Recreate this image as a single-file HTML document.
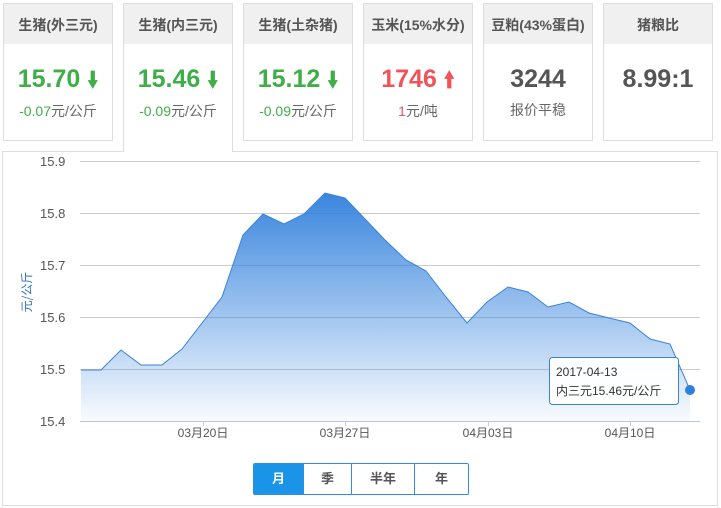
<!DOCTYPE html>
<html><head><meta charset="utf-8"><style>
body{margin:0;width:721px;height:508px;background:#fff;font-family:"Liberation Sans","Noto Sans CJK SC",sans-serif;position:relative;overflow:hidden}
.card{position:absolute;top:3px;width:108px;height:136px;border:1px solid #ddd;background:#fff;text-align:center}
.card .h{height:40px;background:#f0f0f0;line-height:42px;font-size:14px;font-weight:bold;color:#555}
.card .v{margin-top:20px;font-size:25px;font-weight:bold;line-height:30px}
.card .s{margin-top:6px;font-size:14px;color:#666}
.g{color:#3fae49}.r{color:#f05459}.k{color:#555}
.act{height:148px;border-bottom:none;z-index:2}
.panel{position:absolute;left:2px;top:151px;width:714px;height:353px;border:1px solid #ddd}
.btns{position:absolute;top:463px;left:253px;height:30px;border:1px solid #2f8de4;display:flex;border-radius:2px;overflow:hidden}
.btns div{height:30px;line-height:30px;text-align:center;font-size:13px;font-weight:bold;color:#555;border-left:1px solid #2f8de4}
.btns div:first-child{border-left:none;background:#1a94e6;color:#fff}
</style></head><body>
<div class="panel"></div>
<div class="card" style="left:3px"><div class="h">生猪(外三元)</div><div class="v g">15.70 <span style="font-size:22px">&#129051;</span></div><div class="s"><span class="g">-0.07</span>元/公斤</div></div>
<div class="card act" style="left:123px"><div class="h">生猪(内三元)</div><div class="v g">15.46 <span style="font-size:22px">&#129051;</span></div><div class="s"><span class="g">-0.09</span>元/公斤</div></div>
<div class="card" style="left:243px"><div class="h">生猪(土杂猪)</div><div class="v g">15.12 <span style="font-size:22px">&#129051;</span></div><div class="s"><span class="g">-0.09</span>元/公斤</div></div>
<div class="card" style="left:363px"><div class="h">玉米(15%水分)</div><div class="v r">1746 <span style="font-size:22px">&#129049;</span></div><div class="s"><span class="r">1</span>元/吨</div></div>
<div class="card" style="left:483px"><div class="h">豆粕(43%蛋白)</div><div class="v k">3244</div><div class="s">报价平稳</div></div>
<div class="card" style="left:603px"><div class="h">猪粮比</div><div class="v k">8.99:1</div><div class="s"></div></div>
<svg style="position:absolute;left:0;top:0" width="721" height="508">
<defs><linearGradient id="gr" x1="0" y1="0" x2="0" y2="1"><stop offset="0" stop-color="#2f7fdc" stop-opacity=".95"/><stop offset="1" stop-color="#2f7fdc" stop-opacity=".03"/></linearGradient></defs>
<g stroke="#ccc" stroke-width="1">
<line x1="80" y1="161.5" x2="700" y2="161.5"/><line x1="80" y1="213.5" x2="700" y2="213.5"/><line x1="80" y1="265.5" x2="700" y2="265.5"/><line x1="80" y1="317.5" x2="700" y2="317.5"/><line x1="80" y1="369.5" x2="700" y2="369.5"/><line x1="80" y1="421.5" x2="700" y2="421.5" stroke="#b8c8e0"/>
<line x1="203.5" y1="421" x2="203.5" y2="426"/><line x1="345.5" y1="421" x2="345.5" y2="426"/><line x1="488.5" y1="421" x2="488.5" y2="426"/><line x1="630.5" y1="421" x2="630.5" y2="426"/>
</g>
<path d="M81,370 L101,370 L121,350 L141,365 L162,365 L182,349 L202,323 L222,297 L243,235 L263,214 L284,224 L304,214 L325,193 L345,198 L365,219 L385,240 L406,260 L426,271 L446,297 L467,323 L487,302 L508,287 L528,292 L548,307 L569,302 L589,313 L609,318 L630,323 L650,339 L670,344 L690,390 L690,421 L81,421 Z" fill="url(#gr)"/>
<path d="M81,370 L101,370 L121,350 L141,365 L162,365 L182,349 L202,323 L222,297 L243,235 L263,214 L284,224 L304,214 L325,193 L345,198 L365,219 L385,240 L406,260 L426,271 L446,297 L467,323 L487,302 L508,287 L528,292 L548,307 L569,302 L589,313 L609,318 L630,323 L650,339 L670,344 L690,390" fill="none" stroke="#3b82d8" stroke-width="1"/>
<circle cx="690" cy="390" r="5" fill="#2f7fdc"/>
<g font-size="13" fill="#555" font-family="Liberation Sans,sans-serif">
<text x="40" y="166">15.9</text><text x="40" y="218">15.8</text><text x="40" y="270">15.7</text><text x="40" y="322">15.6</text><text x="40" y="374">15.5</text><text x="40" y="426">15.4</text>
</g>
<g font-size="12" fill="#555" text-anchor="middle" font-family="Liberation Sans,Noto Sans CJK SC,sans-serif">
<text x="203" y="437">03月20日</text><text x="345" y="437">03月27日</text><text x="488" y="437">04月03日</text><text x="630" y="437">04月10日</text>
</g>
<text transform="translate(31,292) rotate(-90)" text-anchor="middle" font-size="12" fill="#2f6fc0" font-family="Noto Sans CJK SC,sans-serif">元/公斤</text>
<rect x="549.5" y="357.5" width="129" height="47" rx="3" fill="#fff" fill-opacity=".95" stroke="#3b82d8"/>
<text x="556" y="376" font-size="12" fill="#333" font-family="Liberation Sans,sans-serif">2017-04-13</text>
<text x="556" y="395" font-size="12" fill="#333" font-family="Liberation Sans,Noto Sans CJK SC,sans-serif">内三元15.46元/公斤</text>
</svg>
<div class="btns"><div style="width:49px">月</div><div style="width:47px">季</div><div style="width:62px">半年</div><div style="width:53px">年</div></div>
</body></html>
